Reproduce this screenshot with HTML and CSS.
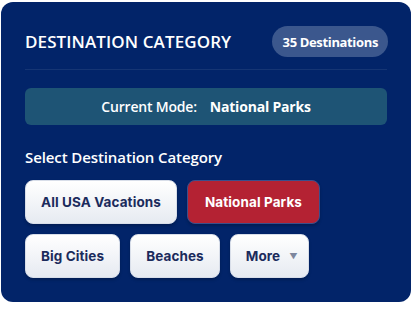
FILE: index.html
```html
<!DOCTYPE html>
<html lang="en">
<head>
<meta charset="utf-8">
<title>Destination Category</title>
<link rel="stylesheet" href="styles.css">
</head>
<body>
<section class="card">
  <header class="card-header">
    <h2 class="title">DESTINATION CATEGORY</h2>
    <span class="badge">35 Destinations</span>
  </header>
  <div class="mode">
    <span class="mode-label">Current Mode:</span>
    <span class="mode-value">National Parks</span>
  </div>
  <h3 class="section-label">Select Destination Category</h3>
  <div class="buttons">
    <button class="btn">All USA Vacations</button>
    <button class="btn btn-active">National Parks</button>
    <button class="btn">Big Cities</button>
    <button class="btn">Beaches</button>
    <button class="btn btn-more">More <span class="caret">&#9660;</span></button>
  </div>
</section>
</body>
</html>
```
FILE: styles.css
```css
* { box-sizing: border-box; }
html, body { margin: 0; background: #ffffff; }
body { padding: 2px 4px 7px 1px; }

.card {
  width: 410px;
  height: 300px;
  background: #022469;
  border-radius: 12px;
  padding: 24px 24px 0 24px;
  font-family: "Open Sans", "Noto Sans", sans-serif;
  color: #ffffff;
}

.card-header {
  display: flex;
  align-items: center;
  justify-content: space-between;
  padding-bottom: 12px;
  border-bottom: 1px solid rgba(255,255,255,0.08);
}

.title {
  margin: 0;
  font-size: 17px;
  font-weight: 600;
  letter-spacing: 0.1px;
  line-height: 22px;
}

.badge {
  display: inline-flex;
  align-items: center;
  height: 31px;
  padding: 0 10px 0 11px;
  margin-right: -1px;
  border-radius: 16px;
  background: #3b578d;
  font-size: 13px;
  font-weight: 700;
  letter-spacing: -0.35px;
}

.mode {
  margin-top: 18px;
  height: 37px;
  border-radius: 6px;
  background: #1e5475;
  display: flex;
  align-items: center;
  justify-content: center;
  gap: 13px;
  font-size: 14px;
  letter-spacing: -0.2px;
}
.mode-label { font-weight: 600; }
.mode-value { font-weight: 700; }

.section-label {
  margin: 22px 0 0 0;
  font-size: 15px;
  font-weight: 600;
  line-height: 20px;
  letter-spacing: -0.1px;
}

.buttons {
  margin-top: 13px;
  display: flex;
  flex-wrap: wrap;
  column-gap: 10px;
  row-gap: 10px;
  width: 310px;
}

.btn {
  height: 44px;
  padding: 0 15px;
  border-radius: 8px;
  border: 1px solid #d8dee9;
  background: linear-gradient(180deg, #ffffff 0%, #e6eaf1 100%);
  color: #1b2b5c;
  font-family: "Inter", "Lato", sans-serif;
  font-size: 13.5px;
  font-weight: 700;
  letter-spacing: 0.1px;
  box-shadow: 0 2px 3px rgba(0,0,0,0.2);
}

.btn-active {
  background: #b42233;
  border: 1px solid #3a4f8c;
  color: #ffffff;
  padding: 0 17px;
}

.btn-more {
  display: inline-flex;
  align-items: center;
  gap: 9px;
  padding: 0 10px 0 15px;
}

.caret {
  font-size: 8px;
  color: #7d879e;
}
```
